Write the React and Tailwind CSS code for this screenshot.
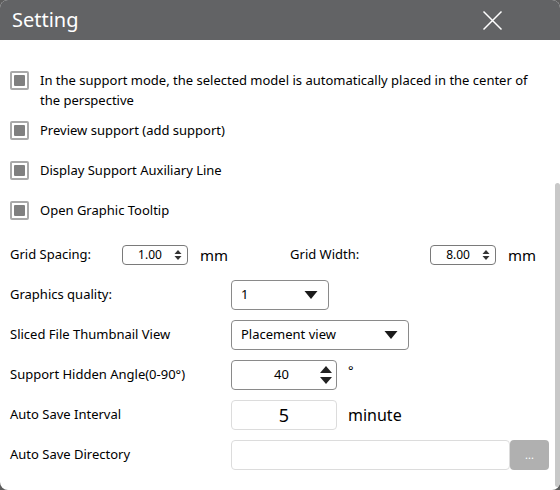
const FONT = { fontFamily: '"Noto Sans", "Open Sans", sans-serif' };

function Check({ children }) {
  return (
    <div className="flex items-start gap-[11px]">
      <div className="mt-[1px] w-[19px] h-[19px] shrink-0 border-2 border-[#a9a9a9] rounded-[2px] bg-white flex items-center justify-center">
        <div className="w-[11px] h-[11px] bg-[#808080] rounded-[1px]" />
      </div>
      <div className="text-[13px] leading-[20px] text-black">{children}</div>
    </div>
  );
}

function SmallSpin({ value }) {
  return (
    <div className="w-[66px] h-[20px] border border-[#7a7a7a] rounded-[4px] bg-white flex items-center">
      <span className="flex-1 text-center text-[12px] leading-none pl-[4px]">{value}</span>
      <svg width="10" height="12" viewBox="0 0 10 12" className="mr-[4px]">
        <path d="M5 1 L8.5 5 H1.5 Z" fill="#333" />
        <path d="M5 11 L8.5 7 H1.5 Z" fill="#333" />
      </svg>
    </div>
  );
}

function Combo({ value, width }) {
  return (
    <div
      className={`${width} h-[30px] border border-[#8a8a8a] rounded-[4px] bg-white flex items-center pl-[9px] pr-[10px]`}
    >
      <span className="flex-1 text-[13px]">{value}</span>
      <svg width="14" height="10" viewBox="0 0 14 10">
        <path d="M0.5 1 H13.5 L7 9 Z" fill="#1a1a1a" />
      </svg>
    </div>
  );
}

function Row({ label, children }) {
  return (
    <div className="flex items-center h-[30px]">
      <div className="w-[221px] text-[13px]">{label}</div>
      {children}
    </div>
  );
}

export default function App() {
  return (
    <div className="w-[560px] h-[490px] bg-[#5d5d5d]" style={FONT}>
      <div className="w-full h-full bg-white rounded-[8px] overflow-hidden flex flex-col">
        <div className="h-[40px] shrink-0 bg-[#626365] flex items-center justify-between pl-[12px] pr-[57px]">
          <span className="text-white text-[20px] leading-none">Setting</span>
          <svg width="21" height="21" viewBox="0 0 21 21">
            <path d="M1.5 1.5 L19.5 19.5 M19.5 1.5 L1.5 19.5" stroke="#fff" strokeWidth="1.5" />
          </svg>
        </div>

        <div className="flex-1 flex">
          <div className="flex-1 pl-[10px] pr-[6px]">
            <div className="flex flex-col pt-[30px]">
              <Check>
                In the support mode, the selected model is automatically placed in the center of
                <br />
                the perspective
              </Check>
              <div className="mt-[10px]">
                <Check>Preview support (add support)</Check>
              </div>
              <div className="mt-[20px]">
                <Check>Display Support Auxiliary Line</Check>
              </div>
              <div className="mt-[20px]">
                <Check>Open Graphic Tooltip</Check>
              </div>
            </div>

            <div className="flex items-center h-[20px] mt-[25px]">
              <div className="w-[112px] text-[13px]">Grid Spacing:</div>
              <SmallSpin value="1.00" />
              <span className="ml-[12px] text-[15px]">mm</span>
              <div className="ml-[62px] w-[140px] text-[13px]">Grid Width:</div>
              <SmallSpin value="8.00" />
              <span className="ml-[12px] text-[15px]">mm</span>
            </div>

            <div className="flex flex-col gap-[10px] mt-[15px]">
              <Row label="Graphics quality:">
                <Combo value="1" width="w-[98px]" />
              </Row>
              <Row label="Sliced File Thumbnail View">
                <Combo value="Placement view" width="w-[178px]" />
              </Row>
              <Row label="Support Hidden Angle(0-90°)">
                <div className="w-[106px] h-[30px] border border-[#8a8a8a] rounded-[4px] bg-white flex items-center">
                  <span className="flex-1 text-center text-[13px] pl-[12px]">40</span>
                  <svg width="14" height="20" viewBox="0 0 14 20" className="mr-[3px]">
                    <path d="M7 1 L13 8 H1 Z" fill="#222" />
                    <path d="M7 19 L13 12 H1 Z" fill="#222" />
                  </svg>
                </div>
                <span className="ml-[11px] text-[13px] self-start mt-[1px]">°</span>
              </Row>
              <Row label="Auto Save Interval">
                <div className="w-[106px] h-[30px] border border-[#dcdcdc] rounded-[4px] bg-white flex items-center justify-center text-[18px]">
                  5
                </div>
                <span className="ml-[11px] text-[16px]">minute</span>
              </Row>
              <Row label="Auto Save Directory">
                <div className="w-[279px] h-[30px] border border-[#dcdcdc] rounded-[4px] bg-white" />
                <div className="w-[39px] h-[30px] rounded-[4px] bg-[#b0b0b0] text-white text-[11px] flex items-center justify-center">
                  ...
                </div>
              </Row>
            </div>
          </div>

          <div className="w-[8px] shrink-0 pt-[143px] pb-[3px] pr-[3px]">
            <div className="w-[5px] h-full bg-[#c8c8c8] rounded-full" />
          </div>
        </div>
      </div>
    </div>
  );
}
